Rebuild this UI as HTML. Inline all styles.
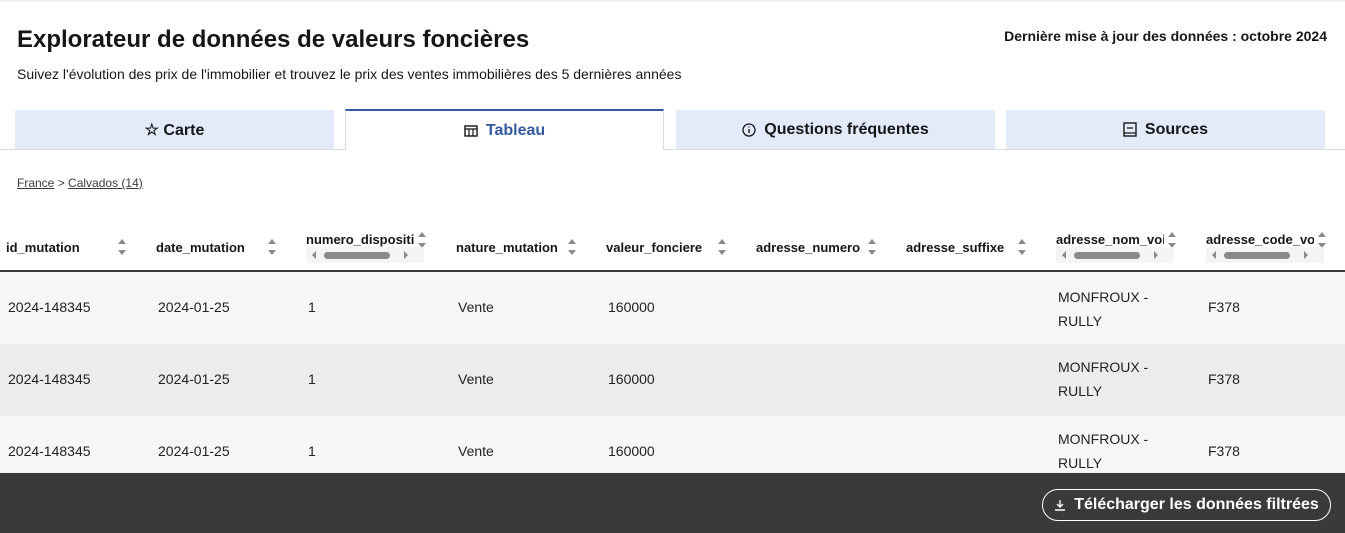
<!DOCTYPE html>
<html><head><meta charset="utf-8"><style>
*{margin:0;padding:0;box-sizing:border-box}
body{width:1345px;height:533px;overflow:hidden;background:#fff;font-family:"Liberation Sans",sans-serif;color:#161616;position:relative}
.a{position:absolute}
.tab{position:absolute;top:110px;height:39px;width:319px;background:#e3ebfb;font-size:16px;font-weight:bold;color:#161616;display:flex;align-items:center;justify-content:center;gap:8px}
.th{position:absolute;top:232px;font-size:13px;font-weight:bold;white-space:nowrap}
.row{position:absolute;left:0;width:1345px;height:72px}
.c{position:absolute;font-size:14px;color:#222}
.sb{position:absolute;top:247px;width:118px;height:16px;background:#f4f4f4}
.sb i{position:absolute;top:5px;left:18px;width:66px;height:7px;border-radius:4px;background:#8a8a8a}
.sb b{position:absolute;top:4px;width:0;height:0;border-top:4px solid transparent;border-bottom:4px solid transparent}
</style></head><body>
<div class="a" style="top:0;left:0;width:1345px;height:2px;background:#f0f0f0"></div>
<div class="a" style="left:17px;top:26px;font-size:24px;font-weight:bold">Explorateur de données de valeurs foncières</div>
<div class="a" style="left:17px;top:66px;font-size:14px">Suivez l'évolution des prix de l'immobilier et trouvez le prix des ventes immobilières des 5 dernières années</div>
<div class="a" style="right:18px;top:28px;font-size:14px;font-weight:bold">Dernière mise à jour des données : octobre 2024</div>
<div class="a" style="left:0;top:149px;width:1345px;height:1px;background:#ddd"></div>
<div class="tab" style="left:15px">☆ Carte</div>
<div class="tab" style="left:345px;top:109px;height:41px;background:#fff;border:1px solid #ddd;border-top:2px solid #3558a2;border-bottom:none;color:#3558a2"><svg width="14" height="12" viewBox="0 0 14 12"><rect x="1" y="1" width="12" height="10" fill="none" stroke="#161616" stroke-width="1.4"/><path d="M1 4h12M5 4v7M9 4v7" stroke="#161616" stroke-width="1.2"/></svg> Tableau</div>
<div class="tab" style="left:676px"><svg width="14" height="14" viewBox="0 0 14 14"><circle cx="7" cy="7" r="6" fill="none" stroke="#161616" stroke-width="1.3"/><path d="M7 6v4M7 3.5v1" stroke="#161616" stroke-width="1.4"/></svg> Questions fréquentes</div>
<div class="tab" style="left:1006px"><svg width="14" height="15" viewBox="0 0 14 15"><rect x="1" y="1" width="12" height="13" fill="none" stroke="#161616" stroke-width="1.4"/><path d="M4 6h6M1 11h12" stroke="#161616" stroke-width="1.3"/></svg> Sources</div>
<div class="a" style="left:17px;top:176px;font-size:12px;color:#3a3a3a"><u>France</u> &gt; <u>Calvados (14)</u></div>

<div class="th" style="left:6px;top:240px">id_mutation</div>
<div class="th" style="left:156px;top:240px">date_mutation</div>
<div class="th" style="left:306px">numero_dispositi</div>
<div class="th" style="left:456px;top:240px">nature_mutation</div>
<div class="th" style="left:606px;top:240px">valeur_fonciere</div>
<div class="th" style="left:756px;top:240px">adresse_numero</div>
<div class="th" style="left:906px;top:240px">adresse_suffixe</div>
<div class="th" style="left:1056px;width:108px;overflow:hidden">adresse_nom_voie</div>
<div class="th" style="left:1206px;width:108px;overflow:hidden">adresse_code_voie</div>
<svg class="a" style="left:0;top:0" width="1345" height="270">
<g fill="#8a8a8a">
<path d="M118 244l4-5 4 5zM118 250l4 5 4-5z"/>
<path d="M268 244l4-5 4 5zM268 250l4 5 4-5z"/>
<path d="M418 237l4-5 4 5zM418 243l4 5 4-5z"/>
<path d="M568 244l4-5 4 5zM568 250l4 5 4-5z"/>
<path d="M718 244l4-5 4 5zM718 250l4 5 4-5z"/>
<path d="M868 244l4-5 4 5zM868 250l4 5 4-5z"/>
<path d="M1018 244l4-5 4 5zM1018 250l4 5 4-5z"/>
<path d="M1168 237l4-5 4 5zM1168 243l4 5 4-5z"/>
<path d="M1318 237l4-5 4 5zM1318 243l4 5 4-5z"/>
</g></svg>
<div class="sb" style="left:306px"><b style="left:6px;border-right:4px solid #8a8a8a"></b><i></i><b style="left:98px;border-left:4px solid #8a8a8a"></b></div>
<div class="sb" style="left:1056px"><b style="left:6px;border-right:4px solid #8a8a8a"></b><i></i><b style="left:98px;border-left:4px solid #8a8a8a"></b></div>
<div class="sb" style="left:1206px"><b style="left:6px;border-right:4px solid #8a8a8a"></b><i></i><b style="left:98px;border-left:4px solid #8a8a8a"></b></div>
<div class="a" style="left:0;top:270px;width:1345px;height:2px;background:#3a3a3a"></div>

<div class="row" style="top:272px;background:#f6f6f6">
<div class="c" style="left:8px;top:27px">2024-148345</div><div class="c" style="left:158px;top:27px">2024-01-25</div><div class="c" style="left:308px;top:27px">1</div><div class="c" style="left:458px;top:27px">Vente</div><div class="c" style="left:608px;top:27px">160000</div><div class="c" style="left:1058px;top:13px;line-height:24px">MONFROUX -<br>RULLY</div><div class="c" style="left:1208px;top:27px">F378</div></div>
<div class="row" style="top:344px;background:#ececec">
<div class="c" style="left:8px;top:27px">2024-148345</div><div class="c" style="left:158px;top:27px">2024-01-25</div><div class="c" style="left:308px;top:27px">1</div><div class="c" style="left:458px;top:27px">Vente</div><div class="c" style="left:608px;top:27px">160000</div><div class="c" style="left:1058px;top:11px;line-height:24px">MONFROUX -<br>RULLY</div><div class="c" style="left:1208px;top:27px">F378</div></div>
<div class="row" style="top:416px;background:#f6f6f6">
<div class="c" style="left:8px;top:27px">2024-148345</div><div class="c" style="left:158px;top:27px">2024-01-25</div><div class="c" style="left:308px;top:27px">1</div><div class="c" style="left:458px;top:27px">Vente</div><div class="c" style="left:608px;top:27px">160000</div><div class="c" style="left:1058px;top:11px;line-height:24px">MONFROUX -<br>RULLY</div><div class="c" style="left:1208px;top:27px">F378</div></div>

<div class="a" style="left:0;top:473px;width:1345px;height:60px;background:#3a3a3a"></div>
<div class="a" style="left:1042px;top:489px;width:289px;height:32px;border:1px solid #fff;border-radius:16px;color:#fff;font-size:16px;font-weight:bold;display:flex;align-items:center;justify-content:center;gap:8px"><svg width="12" height="12" viewBox="0 0 12 12"><path d="M6 1v7M3 5l3 3 3-3M1 11h10" stroke="#fff" stroke-width="1.4" fill="none"/></svg>Télécharger les données filtrées</div>
</body></html>
